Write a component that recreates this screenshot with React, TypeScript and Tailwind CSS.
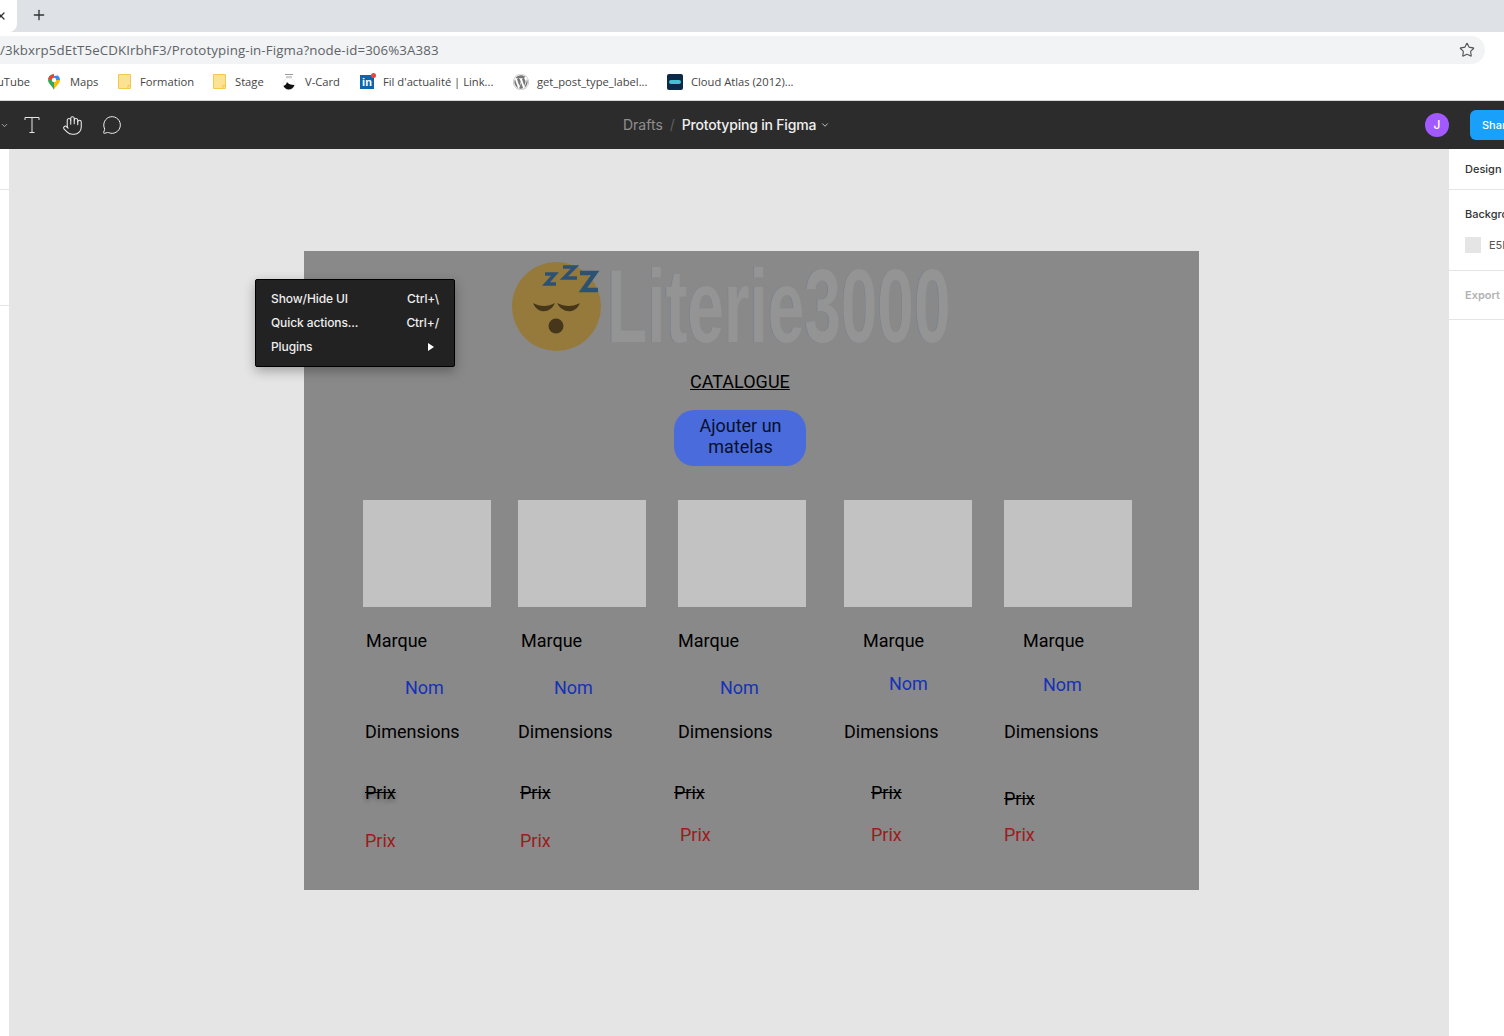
import React from "react";
import { ChevronDown, Hand, MessageCircle, Plus, Star, X } from "lucide-react";
import { FaWordpress } from "react-icons/fa";

const Folder = () => (
  <svg width="13" height="15" viewBox="0 0 13 15" className="shrink-0">
    <path d="M.5.5h12v14H.5z" fill="#fde293" stroke="#f2c94c" />
    <path d="M10 14.5v-3h2.5" fill="none" stroke="#f2c94c" />
  </svg>
);

const MapsPin = () => (
  <svg width="12" height="16" viewBox="0 0 12 16" className="shrink-0">
    <path d="M6 16C4.500 12 0 9.500 0 6a6 6 0 0 1 6-6z" fill="#34a853" />
    <path d="M6 16c1.500-4 6-6.500 6-10L6 6z" fill="#fbbc04" />
    <path d="M1 2.500 6 6l6 0a6 6 0 0 0-2-4.500z" fill="#4285f4" />
    <path d="M1.500 2 6 0v6L.2 5z" fill="#ea4335" />
    <circle cx="6" cy="6" r="2.200" fill="#fff" />
  </svg>
);

const VCardIcon = () => (
  <svg width="14" height="18" viewBox="0 0 14 18" className="shrink-0">
    <path d="M3 1.500h8M4 4h6" stroke="#999" strokeWidth="1" />
    <circle cx="7" cy="11" r="6" fill="#fff" stroke="#ddd" strokeWidth="0.500" />
    <path d="M1.500 13c2-1 3-2 3.500-4 1 2 4 3 7.500 3-1 3-3.500 4.500-6 4.500-2 0-4-1.500-5-3.500z" fill="#111" />
  </svg>
);

const LinkedInIcon = () => (
  <div className="relative w-[14px] h-[14px] mt-[1px] bg-[#0a66b0] shrink-0 flex items-center justify-center">
    <span className="font-['Liberation_Sans',sans-serif] font-bold text-[11px] leading-none text-white">in</span>
    <span className="absolute -top-[2px] -right-[2px] w-[5px] h-[5px] rounded-full bg-[#e8453c]" />
  </div>
);

const CloudIcon = () => (
  <div className="w-4 h-4 rounded-[2px] bg-[#0c2a47] flex items-center justify-center shrink-0">
    <div className="w-3 h-1 rounded-full bg-[#45c1d4]" />
  </div>
);

const bookmarks = [
  { label: "Maps", icon: <MapsPin />, gap: "gap-[10px]", width: "w-[70px]" },
  { label: "Formation", icon: <Folder />, gap: "gap-[9px]", width: "w-[95px]" },
  { label: "Stage", icon: <Folder />, gap: "gap-[9px]", width: "w-[69px]" },
  { label: "V-Card", icon: <VCardIcon />, gap: "gap-[9px]", width: "w-[78px]" },
  { label: "Fil d'actualité | Link...", icon: <LinkedInIcon />, gap: "gap-[9px]", width: "w-[153px]" },
  { label: "get_post_type_label...", icon: <FaWordpress className="text-[16px] text-[#777] shrink-0" />, gap: "gap-[8px]", width: "w-[154px]" },
  { label: "Cloud Atlas (2012)...", icon: <CloudIcon />, gap: "gap-[8px]", width: "w-[140px]" },
];

const Label = ({ className, children }: { className: string; children: React.ReactNode }) => (
  <span className={`absolute font-['Roboto',sans-serif] text-[18px] leading-[21px] whitespace-nowrap ${className}`}>
    {children}
  </span>
);

const SleepingFace = () => (
  <svg width="92" height="92" viewBox="0 0 92 92" className="absolute left-[206px] top-[9px]">
    <circle cx="46.500" cy="46.500" r="44.500" fill="#957a3c" />
    <path d="M23 43C30 47 38 47 45 43 41 53 28 55 23 43z" fill="#46371a" />
    <path d="M47 43C55 47 63 47 70 43 65 55 52 53 47 43z" fill="#46371a" />
    <circle cx="46" cy="66" r="7.500" fill="#46371a" />
    <g fill="none" stroke="#2c5273" strokeWidth="3.500" strokeLinejoin="miter">
      <path d="M35 14h10L36 24h10" />
      <path d="M53 7h12L54 18h13" />
      <path d="M70 13h15L73 30h15" strokeWidth="4.500" />
    </g>
  </svg>
);

const App: React.FC = () => {
  return (
    <div className="w-[1504px] h-[1036px] overflow-hidden flex flex-col bg-white">
      {/* tab strip */}
      <div className="h-8 bg-[#dee1e6] flex shrink-0">
        <div className="w-[17px] h-8 bg-white rounded-br-lg flex items-center overflow-hidden">
          <X size={12} strokeWidth={2.5} className="-ml-[5px] text-[#333] shrink-0" />
        </div>
        <div className="flex items-center ml-[14px] pb-[2px]">
          <Plus size={16} strokeWidth={2} className="text-[#333]" />
        </div>
      </div>

      {/* address bar */}
      <div className="h-8 pt-1 flex shrink-0">
        <div className="w-[1485px] h-7 bg-[#f1f3f4] rounded-r-full flex items-center justify-between pr-[10px]">
          <span className="pt-[1px] font-['Open_Sans',sans-serif] text-[13.3px] text-[#5f6368] tracking-[0.1px]">
            /3kbxrp5dEtT5eCDKIrbhF3/Prototyping-in-Figma?node-id=306%3A383
          </span>
          <Star size={16} strokeWidth={1.7} className="text-[#555]" />
        </div>
      </div>

      {/* bookmarks */}
      <div className="h-[37px] flex items-center shrink-0 border-b border-[#d8d8d8] font-['Open_Sans',sans-serif] text-[11.2px] text-[#444]">
        <span className="w-[48px] shrink-0 -indent-[3px]">uTube</span>
        {bookmarks.map((b) => (
          <div key={b.label} className={`flex items-center whitespace-nowrap shrink-0 ${b.gap} ${b.width}`}>
            {b.icon}
            <span>{b.label}</span>
          </div>
        ))}
      </div>

      {/* figma toolbar */}
      <div className="h-12 bg-[#2c2c2c] flex items-center shrink-0">
        <ChevronDown size={9} className="text-[#ccc] shrink-0" />
        <svg width="16" height="18" viewBox="0 0 16 18" className="ml-[15px] shrink-0" fill="none" stroke="#e8e8e8" strokeWidth="1">
          <path d="M1 4V1.500h14V4M8 1.500v15M5.500 16.500h5" />
        </svg>
        <Hand size={21} strokeWidth={1.2} className="text-[#eee] ml-[22px] shrink-0" />
        <MessageCircle size={20} strokeWidth={1.2} className="text-[#eee] ml-[19px] shrink-0" />
        <div className="ml-[501px] flex items-center font-['Inter',sans-serif] text-sm whitespace-nowrap">
          <span className="text-[#8f8f8f]">Drafts</span>
          <span className="text-[#5f5f5f] mx-[7px]">/</span>
          <span className="text-[#f0f0f0] font-medium tracking-[-0.2px]">Prototyping in Figma</span>
          <ChevronDown size={10} className="text-[#ddd] ml-[4px]" />
        </div>
        <div className="ml-auto w-6 h-6 rounded-full bg-[#a259ff] text-white flex items-center justify-center font-['Inter',sans-serif] text-[12px] font-medium shrink-0">
          J
        </div>
        <div className="w-[34px] h-[30px] rounded-l-[6px] bg-[#18a0fb] text-white flex items-center pl-3 ml-[21px] font-['Inter',sans-serif] text-[11px] font-medium overflow-hidden shrink-0">
          Share
        </div>
      </div>

      {/* workspace */}
      <div className="flex-1 flex min-h-0">
        <div className="w-[10px] bg-white border-r border-[#e5e5e5] shrink-0 flex flex-col">
          <div className="h-[41px] border-b border-[#e5e5e5]" />
          <div className="h-[116px] border-b border-[#e5e5e5]" />
        </div>

        <div className="flex-1 bg-[#e5e5e5] relative">
          {/* frame on the canvas */}
          <div className="absolute left-[294px] top-[102px] w-[895px] h-[639px] bg-[#898989]">
            <SleepingFace />
            <span className="absolute left-[303px] top-[3px] origin-top-left scale-x-[0.632] font-['Liberation_Sans',sans-serif] font-bold text-[104px] leading-[104px] text-[#949494] whitespace-nowrap [text-shadow:-1px_0_0_#76818f]">
              Literie3000
            </span>

            <Label className="left-[386px] top-[120px] text-black underline">CATALOGUE</Label>

            <div className="absolute left-[370px] top-[159px] w-[132px] h-[56px] rounded-[20px] bg-[#4a6bdc] pb-1 pl-[1px] flex items-center justify-center text-center font-['Roboto',sans-serif] text-[18px] leading-[21px] text-[#08102c]">
              Ajouter un
              <br />
              matelas
            </div>

            <div className="absolute left-[59px] top-[249px] w-32 h-[107px] bg-[#c2c2c2]" />
            <div className="absolute left-[214px] top-[249px] w-32 h-[107px] bg-[#c2c2c2]" />
            <div className="absolute left-[374px] top-[249px] w-32 h-[107px] bg-[#c2c2c2]" />
            <div className="absolute left-[540px] top-[249px] w-32 h-[107px] bg-[#c2c2c2]" />
            <div className="absolute left-[700px] top-[249px] w-32 h-[107px] bg-[#c2c2c2]" />

            <Label className="left-[62px] top-[379px] text-black">Marque</Label>
            <Label className="left-[217px] top-[379px] text-black">Marque</Label>
            <Label className="left-[374px] top-[379px] text-black">Marque</Label>
            <Label className="left-[559px] top-[379px] text-black">Marque</Label>
            <Label className="left-[719px] top-[379px] text-black">Marque</Label>

            <Label className="left-[101px] top-[426px] text-[#1631b8]">Nom</Label>
            <Label className="left-[250px] top-[426px] text-[#1631b8]">Nom</Label>
            <Label className="left-[416px] top-[426px] text-[#1631b8]">Nom</Label>
            <Label className="left-[585px] top-[422px] text-[#1631b8]">Nom</Label>
            <Label className="left-[739px] top-[423px] text-[#1631b8]">Nom</Label>

            <Label className="left-[61px] top-[470px] text-black">Dimensions</Label>
            <Label className="left-[214px] top-[470px] text-black">Dimensions</Label>
            <Label className="left-[374px] top-[470px] text-black">Dimensions</Label>
            <Label className="left-[540px] top-[470px] text-black">Dimensions</Label>
            <Label className="left-[700px] top-[470px] text-black">Dimensions</Label>

            <Label className="left-[61px] top-[531px] text-black line-through [text-shadow:0_3px_4px_rgba(0,0,0,0.3)]">Prix</Label>
            <Label className="left-[216px] top-[531px] text-black line-through">Prix</Label>
            <Label className="left-[370px] top-[531px] text-black line-through">Prix</Label>
            <Label className="left-[567px] top-[531px] text-black line-through">Prix</Label>
            <Label className="left-[700px] top-[537px] text-black line-through">Prix</Label>

            <Label className="left-[61px] top-[579px] text-[#9c1c1c]">Prix</Label>
            <Label className="left-[216px] top-[579px] text-[#9c1c1c]">Prix</Label>
            <Label className="left-[376px] top-[573px] text-[#9c1c1c]">Prix</Label>
            <Label className="left-[567px] top-[573px] text-[#9c1c1c]">Prix</Label>
            <Label className="left-[700px] top-[573px] text-[#9c1c1c]">Prix</Label>
          </div>

          {/* context menu */}
          <div className="absolute left-[245px] top-[130px] w-[200px] h-[88px] bg-[#222] border border-black rounded-[2px] shadow-[0_4px_12px_rgba(0,0,0,0.3)] py-[7px] pl-[15px] pr-[15px] font-['Inter',sans-serif] text-[12px] font-medium tracking-[-0.1px] text-[#eee]">
            <div className="h-6 flex items-center justify-between">
              <span>Show/Hide UI</span>
              <span>Ctrl+\</span>
            </div>
            <div className="h-6 flex items-center justify-between">
              <span>Quick actions...</span>
              <span>Ctrl+/</span>
            </div>
            <div className="h-6 flex items-center justify-between">
              <span>Plugins</span>
              <span className="w-0 h-0 mr-[5px] border-y-[4px] border-y-transparent border-l-[6px] border-l-white" />
            </div>
          </div>
        </div>

        {/* right panel */}
        <div className="w-[55px] bg-white shrink-0 overflow-hidden font-['Inter',sans-serif] text-[11px] font-medium text-[#333] whitespace-nowrap">
          <div className="h-[41px] border-b border-[#e5e5e5] pl-4 flex items-center">Design</div>
          <div className="h-[81px] border-b border-[#e5e5e5] pl-4 pt-[17px]">
            <div className="leading-[14px]">Background</div>
            <div className="flex items-center gap-2 mt-[16px]">
              <div className="w-4 h-4 bg-[#e5e5e5] shrink-0" />
              <span className="font-normal text-[#555]">E5E5E5</span>
            </div>
          </div>
          <div className="h-[49px] border-b border-[#e5e5e5] pl-4 flex items-center font-semibold text-[#b3b3b3]">Export</div>
        </div>
      </div>
    </div>
  );
};

export default App;
